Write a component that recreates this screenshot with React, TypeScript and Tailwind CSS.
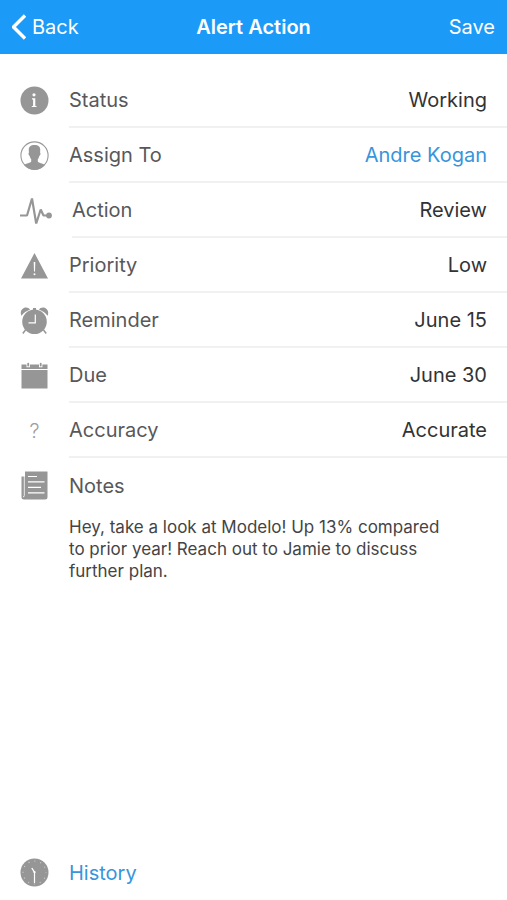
import type { ReactNode } from "react";

const InfoIcon = () => (
  <svg viewBox="0 0 29 29" className="h-[29px] w-[29px] shrink-0" aria-hidden="true">
    <circle cx="14.5" cy="14.5" r="14" fill="#969696" />
    <circle cx="14" cy="8.8" r="1.6" fill="#fff" />
    <path d="M12 12.3h3.300v7.600h1.200v1.100h-4.700v-1.100h1.300v-6.500H12z" fill="#fff" />
  </svg>
);

const PersonIcon = () => (
  <svg viewBox="0 0 29 29" className="h-[29px] w-[29px] shrink-0" aria-hidden="true">
    <circle cx="14.5" cy="14.5" r="13.6" fill="#fff" stroke="#9a9a9a" strokeWidth="1.1" />
    <path
      d="M14.500 4c-4.200 0-6 2-5.700 5.500l.1 2.300c-.7.200-.4 2.700.8 3.100.3 1.500.8 2.600 1.500 3.300v2.300c-.5 1.600-5.200 1.800-7.200 3.500a13.600 13.600 0 0 0 21 0c-2-1.700-6.700-1.900-7.200-3.500v-2.300c.7-.7 1.200-1.800 1.500-3.300 1.200-.4 1.500-2.900.8-3.100l.1-2.300C20.500 6 18.700 4 14.500 4z"
      fill="#969696"
    />
  </svg>
);

const PulseIcon = () => (
  <svg viewBox="0 0 32 29" className="h-[29px] w-8 shrink-0" fill="none" aria-hidden="true">
    <path
      d="M0 19.500h7L12 2.500l4.200 25L20.700 13.500l2.800 6H28"
      stroke="#969696"
      strokeWidth="2.200"
      strokeLinejoin="bevel"
    />
    <circle cx="29" cy="19.500" r="2.900" fill="#969696" />
  </svg>
);

const WarningIcon = () => (
  <svg viewBox="0 0 29 29" className="h-[29px] w-[29px] shrink-0" aria-hidden="true">
    <path d="M14.500 2L28 27.500H1z" fill="#969696" />
    <path d="M13.700 11h1.600l-.3 9.500h-1z" fill="#fff" />
    <circle cx="14.500" cy="23.200" r="1" fill="#fff" />
  </svg>
);

const AlarmIcon = () => (
  <svg viewBox="0 0 29 29" className="h-[29px] w-[29px] shrink-0" aria-hidden="true">
    <g fill="#969696">
      <path d="M1.500 9.800C-.5 6 2 1.600 6 1.600c1.800 0 3.200.8 4 2.200-3.500 1-6.500 3.200-8.500 6z" />
      <path d="M27.500 9.800c2-3.800-.5-8.200-4.500-8.200-1.800 0-3.200.8-4 2.200 3.500 1 6.500 3.200 8.500 6z" />
      <circle cx="14.500" cy="15.700" r="12.300" />
      <path d="M13 2h3v3h-3z" />
    </g>
    <path d="M5.500 24l-2.700 3.500M23.500 24l2.700 3.500" stroke="#969696" strokeWidth="1.500" />
    <path d="M15.300 8.500v8.300H8.500" fill="none" stroke="#fff" strokeWidth="1.200" />
  </svg>
);

const CalendarIcon = () => (
  <svg viewBox="0 0 29 29" className="h-[29px] w-[29px] shrink-0" fill="#969696" aria-hidden="true">
    <path d="M1.500 3.500h26V8h-26zM1.500 9h26v18.500h-26z" />
    <path d="M6.500 2.500h3.400v3.700H6.500zM19 2.500h3.400v3.700H19z" fill="#fff" />
    <rect x="7.300" y="1.800" width="1.800" height="3.700" rx=".9" />
    <rect x="19.800" y="1.800" width="1.800" height="3.700" rx=".9" />
  </svg>
);

const QuestionIcon = () => (
  <span
    aria-hidden="true"
    className="w-[29px] shrink-0 text-center text-xl font-light text-[#a0a0a0]"
  >
    ?
  </span>
);

const NotesIcon = () => (
  <svg viewBox="0 0 29 29" className="h-[29px] w-[29px] shrink-0" aria-hidden="true">
    <path d="M5 .5h22.500v25.500a2.500 2.500 0 0 1-2.500 2.500H4A2.500 2.500 0 0 1 1.500 26V5.500H5z" fill="#969696" />
    <path d="M4.300 5v19.500a1.200 1.200 0 0 1-1.300 1.300" fill="none" stroke="#fff" strokeWidth=".8" />
    <path d="M8 5.500h9M8 10.800h16.500M8 16.300h13M8 21.800h16.500" stroke="#fff" strokeWidth="1.200" />
  </svg>
);

const ClockIcon = () => (
  <svg viewBox="0 0 29 29" className="h-[29px] w-[29px] shrink-0" fill="none" aria-hidden="true">
    <circle cx="14.500" cy="14.500" r="14" fill="#969696" />
    <circle
      cx="14.500"
      cy="14.500"
      r="11.500"
      stroke="#cfcfcf"
      strokeWidth="1.200"
      strokeDasharray="1 5.021"
      strokeDashoffset=".5"
    />
    <path d="M11.800 10l2.500 4" stroke="#fff" strokeWidth="1.400" />
    <path d="M14.500 13.500V25" stroke="#fff" strokeWidth="1.200" />
    <circle cx="14.500" cy="14.200" r="1.100" fill="#fff" />
  </svg>
);

type Field = { label: string; value: string; icon: ReactNode; link?: boolean };

const fields: Field[] = [
  { label: "Status", value: "Working", icon: <InfoIcon /> },
  { label: "Assign To", value: "Andre Kogan", icon: <PersonIcon />, link: true },
  { label: "Action", value: "Review", icon: <PulseIcon /> },
  { label: "Priority", value: "Low", icon: <WarningIcon /> },
  { label: "Reminder", value: "June 15", icon: <AlarmIcon /> },
  { label: "Due", value: "June 30", icon: <CalendarIcon /> },
  { label: "Accuracy", value: "Accurate", icon: <QuestionIcon /> },
];

function FieldRow({ label, value, icon, link }: Field) {
  return (
    <button type="button" className="flex h-[55px] w-full items-stretch gap-5 pl-5 text-left">
      <span className="flex shrink-0 items-center">{icon}</span>
      <span className="flex flex-1 items-center justify-between border-b-2 border-[#f1f1f1] pr-5">
        <span className="text-[#58585a]">{label}</span>
        <span className={link ? "text-[#3795dc]" : "text-[#333335]"}>{value}</span>
      </span>
    </button>
  );
}

export default function App() {
  return (
    <div className="flex min-h-screen flex-col bg-white font-['Inter','Liberation_Sans',sans-serif] text-xl">
      <header className="grid h-[54px] grid-cols-[1fr_auto_1fr] items-center bg-[#1c9af7] px-3 text-white">
        <button type="button" className="flex items-center gap-1.5 justify-self-start">
          <svg viewBox="0 0 14 26" className="h-[26px] w-3.5" fill="none" aria-hidden="true">
            <path d="M13 1.500L1.500 13 13 24.500" stroke="currentColor" strokeWidth="3.400" />
          </svg>
          Back
        </button>
        <h1 className="font-semibold">Alert Action</h1>
        <button type="button" className="justify-self-end">
          Save
        </button>
      </header>

      <main className="pt-[19px]">
        {fields.map((field) => (
          <FieldRow key={field.label} {...field} />
        ))}
        <section aria-labelledby="notes-title">
          <div className="flex h-[55px] items-center gap-5 pl-5">
            <NotesIcon />
            <h2 id="notes-title" className="text-[#58585a]">
              Notes
            </h2>
          </div>
          <p className="mt-[3px] pr-16 pl-[69px] text-[17px] leading-[22px] text-[#444446]">
            Hey, take a look at Modelo! Up 13% compared to prior year! Reach out to Jamie to discuss
            further plan.
          </p>
        </section>
      </main>

      <footer className="mt-auto">
        <a href="#history" className="flex h-[55px] items-center gap-5 pl-5 text-[#3795dc]">
          <ClockIcon />
          History
        </a>
      </footer>
    </div>
  );
}
